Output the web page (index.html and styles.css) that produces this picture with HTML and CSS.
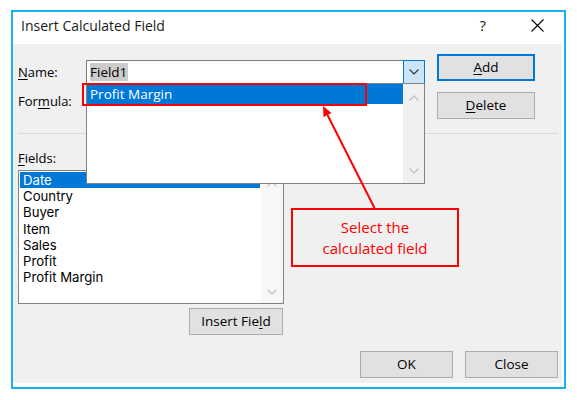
FILE: index.html
```html
<!DOCTYPE html>
<html>
<head>
<meta charset="utf-8">
<link rel="stylesheet" href="styles.css">
</head>
<body>
<div class="dialog">
  <div class="titlebar">
    <span class="title">Insert Calculated Field</span>
    <span class="help">?</span>
    <svg class="close-x" width="13" height="13" viewBox="0 0 13 13"><path d="M0.5 0.5 L12.5 12.5 M12.5 0.5 L0.5 12.5" stroke="#000" stroke-width="1.1" fill="none"/></svg>
  </div>
  <div class="content">
    <div class="top">
      <div class="inputs-col">
        <div class="row">
          <span class="lbl"><u>N</u>ame:</span>
          <div class="combo">
            <span class="combo-text"><span class="sel-grey">Field1</span></span>
            <span class="combo-btn"><svg width="10" height="6" viewBox="0 0 10 6"><path d="M0.5 0.5 L5 5 L9.5 0.5" stroke="#333" stroke-width="1.2" fill="none"/></svg></span>
            <div class="dropdown">
              <div class="dd-list">
                <div class="dd-item">Profit Margin</div>
              </div>
              <div class="dd-scroll">
                <svg width="10" height="6" viewBox="0 0 10 6"><path d="M0.5 5.5 L5 1 L9.5 5.5" stroke="#c2c2c2" stroke-width="1.3" fill="none"/></svg>
                <svg width="10" height="6" viewBox="0 0 10 6"><path d="M0.5 0.5 L5 5 L9.5 0.5" stroke="#c2c2c2" stroke-width="1.3" fill="none"/></svg>
              </div>
            </div>
            <div class="red-highlight"></div>
          </div>
        </div>
        <div class="row">
          <span class="lbl">For<u>m</u>ula:</span>
          <div class="textbox"></div>
        </div>
      </div>
      <div class="btn-col">
        <button class="btn btn-default"><u>A</u>dd</button>
        <button class="btn"><u>D</u>elete</button>
      </div>
    </div>
    <div class="sep"></div>
    <div class="fields-section">
      <div class="lbl fields-lbl"><u>F</u>ields:</div>
      <div class="listbox">
        <ul class="items">
          <li class="selected">Date</li>
          <li>Country</li>
          <li>Buyer</li>
          <li>Item</li>
          <li>Sales</li>
          <li>Profit</li>
          <li>Profit Margin</li>
        </ul>
        <div class="lb-scroll">
          <svg width="10" height="6" viewBox="0 0 10 6"><path d="M0.5 5.5 L5 1 L9.5 5.5" stroke="#c8c8c8" stroke-width="1.3" fill="none"/></svg>
          <svg width="10" height="6" viewBox="0 0 10 6"><path d="M0.5 0.5 L5 5 L9.5 0.5" stroke="#c8c8c8" stroke-width="1.3" fill="none"/></svg>
        </div>
      </div>
      <button class="btn insert-btn">Insert Fie<u>l</u>d</button>
    </div>
    <div class="footer">
      <button class="btn btn-footer">OK</button>
      <button class="btn btn-footer">Close</button>
    </div>
  </div>
</div>

<svg class="arrow" width="577" height="400" viewBox="0 0 577 400">
  <line x1="374.5" y1="208" x2="327.5" y2="115" stroke="#ff0000" stroke-width="2"/>
  <polygon points="323,106 331.5,113 323.5,117" fill="#ff0000"/>
</svg>
<div class="callout">Select the<br>calculated field</div>
</body>
</html>
```
FILE: styles.css
```css
* { box-sizing: border-box; }

body {
  margin: 0;
  width: 577px;
  height: 400px;
  overflow: hidden;
  position: relative;
  background: #ffffff;
  font-family: "Open Sans", "Noto Sans", sans-serif;
  color: #000;
}

u { text-decoration: underline; text-underline-offset: 2px; text-decoration-thickness: 1px; }

.dialog {
  margin: 10px 0 0 11px;
  width: 555px;
  height: 379px;
  border: 2px solid #1ab1f2;
  background: #ffffff;
  display: flex;
  flex-direction: column;
}

.titlebar {
  height: 32px;
  flex: none;
  display: flex;
  align-items: center;
  padding: 0 20px 5px 8px;
}

.title {
  font-size: 14px;
  line-height: 19px;
  color: #1a1a1a;
}

.help {
  margin-left: auto;
  font-size: 15px;
  line-height: 19px;
  color: #222;
  margin-right: 45px;
}

.close-x { display: block; }

.content {
  flex: 1;
  background: #f0f0f0;
  margin: 0 2px 4px 0;
  padding: 0 4px 0 5px;
  display: flex;
  flex-direction: column;
}

.top {
  display: flex;
  gap: 12px;
}

.inputs-col {
  display: flex;
  flex-direction: column;
  padding-top: 16px;
  gap: 5px;
}

.row {
  display: flex;
  align-items: center;
  height: 24px;
}

.lbl {
  width: 68px;
  font-size: 13px;
  line-height: 18px;
}

.combo {
  position: relative;
  width: 339px;
  height: 24px;
  border: 1px solid #7a7a7a;
  background: #fff;
  display: flex;
  align-items: center;
}

.combo-text {
  flex: 1;
  padding-left: 3px;
  font-size: 13.5px;
  line-height: 16px;
}

.sel-grey {
  background: #cccccc;
  padding: 0 1px 0 0;
}

.combo-btn {
  width: 22px;
  height: 24px;
  margin: -1px -1px -1px 0;
  border: 1px solid #0078d7;
  background: #cce4f7;
  display: flex;
  align-items: center;
  justify-content: center;
}

.combo-btn svg { display: block; }

.dropdown {
  position: absolute;
  left: -1px;
  top: 22px;
  width: 339px;
  height: 101px;
  border: 1px solid #828282;
  background: #fff;
  display: flex;
  z-index: 5;
}

.dd-list { flex: 1; }

.dd-item {
  height: 20px;
  line-height: 20px;
  background: #0078d7;
  color: #fff;
  padding-left: 3px;
  font-size: 13.5px;
}

.dd-scroll {
  width: 21px;
  background: #f0f0f0;
  display: flex;
  flex-direction: column;
  justify-content: space-between;
  align-items: center;
  padding: 11px 0 9px 1px;
}

.dd-scroll svg, .lb-scroll svg { display: block; }

.red-highlight {
  position: absolute;
  left: -5px;
  top: 22px;
  width: 285px;
  height: 23px;
  border: 2px solid #ff0000;
  z-index: 6;
}

.textbox {
  width: 339px;
  height: 24px;
  border: 1px solid #7a7a7a;
  background: #fff;
}

.btn-col {
  display: flex;
  flex-direction: column;
  padding-top: 10px;
  gap: 11px;
}

.btn {
  font-family: inherit;
  font-size: 13.5px;
  color: #000;
  background: #e1e1e1;
  border: 1px solid #adadad;
  height: 27px;
  padding: 0 0 2px;
  line-height: 20px;
}

.btn-col .btn { width: 98px; }

.btn-default { border: 2px solid #0078d7; }

.sep {
  margin-top: 14px;
  height: 1px;
  background: #d9d9d9;
}

.fields-section {
  width: 266px;
  display: flex;
  flex-direction: column;
}

.fields-lbl {
  margin-top: 15px;
  margin-bottom: 3px;
}

.listbox {
  height: 134px;
  border: 1px solid #828282;
  background: #fff;
  display: flex;
}

.items {
  list-style: none;
  margin: 1px;
  padding: 0;
  flex: 1;
}

.items li {
  height: 16.2px;
  line-height: 16.2px;
  padding-left: 3px;
  font-family: "Inter", "Open Sans", sans-serif;
  font-size: 13.2px;
}

.items li.selected {
  background: #0078d7;
  color: #fff;
}

.lb-scroll {
  width: 22px;
  background: #f7f7f7;
  display: flex;
  flex-direction: column;
  justify-content: space-between;
  align-items: center;
  padding: 10px 0 8px;
}

.insert-btn {
  align-self: flex-end;
  width: 94px;
  margin: 4px 1px 0 0;
}

.footer {
  margin-top: 16px;
  display: flex;
  justify-content: flex-end;
  gap: 12px;
}

.btn-footer { width: 93px; }

.arrow {
  position: absolute;
  left: 0;
  top: 0;
  pointer-events: none;
  z-index: 10;
}

.callout {
  position: absolute;
  left: 291px;
  top: 208px;
  width: 168px;
  height: 59px;
  border: 2px solid #ff0000;
  background: #f0f0f0;
  color: #ff0000;
  font-size: 15px;
  line-height: 21px;
  display: flex;
  align-items: center;
  justify-content: center;
  text-align: center;
  z-index: 10;
}
```
